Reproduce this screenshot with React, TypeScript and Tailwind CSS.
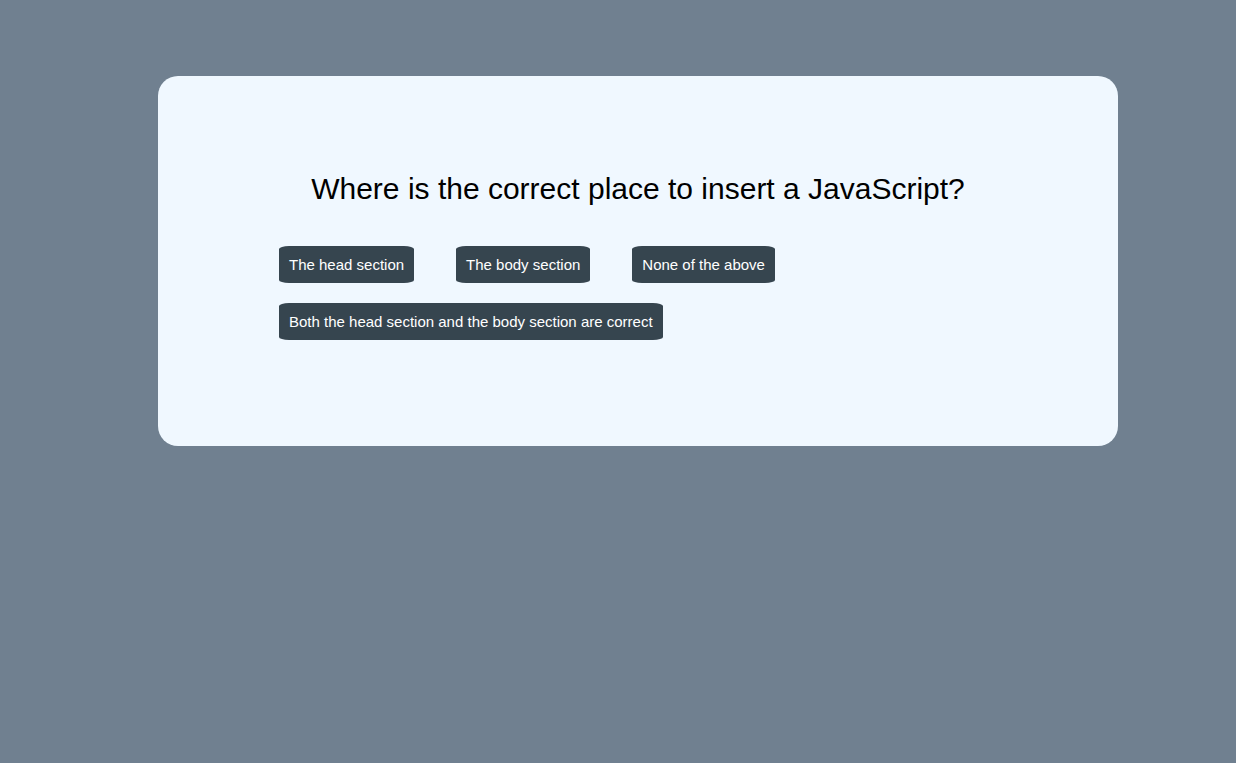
const options = [
  "The head section",
  "The body section",
  "None of the above",
  "Both the head section and the body section are correct",
];

export default function App() {
  return (
    <div className="min-h-[763px] w-full bg-[#708090] pt-[76px] font-['Liberation_Sans',Arial,sans-serif]">
      <div className="ml-[158px] h-[370px] w-[960px] rounded-[20px] bg-[#f0f8ff] px-[121px] pt-[94px]">
        <h1 className="text-center text-[30px] leading-[38px] text-black">
          Where is the correct place to insert a JavaScript?
        </h1>
        <div className="mt-[38px] flex flex-wrap gap-x-[42px] gap-y-[20px]">
          {options.map((o) => (
            <button
              key={o}
              className="h-[37px] rounded-[10px/3px] bg-[#36454f] px-[10px] text-[15px] leading-[17px] text-white"
            >
              {o}
            </button>
          ))}
        </div>
      </div>
    </div>
  );
}
